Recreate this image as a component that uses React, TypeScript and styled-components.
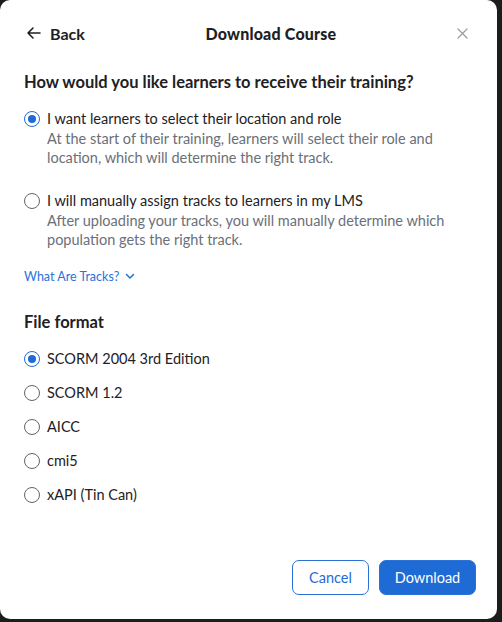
import React, { useState } from "react";
import styled, { createGlobalStyle } from "styled-components";

const Global = createGlobalStyle`
  html, body { margin: 0; padding: 0; background: #1c1c1c; }
  body { font-family: Lato, "Noto Sans", sans-serif; -webkit-font-smoothing: antialiased; }
  * { box-sizing: border-box; }
`;

const Card = styled.div`
  width: 497px;
  height: 619px;
  background: #ffffff;
  border-radius: 10px;
  padding: 0 24px 24px 24px;
  display: flex;
  flex-direction: column;
  color: #1d2125;
`;

const Header = styled.div`
  height: 66px;
  display: flex;
  align-items: center;
`;

const BackButton = styled.button`
  display: flex;
  align-items: center;
  gap: 8px;
  background: none;
  border: none;
  padding: 0 0 0 2px;
  font-family: inherit;
  font-size: 16px;
  font-weight: 700;
  color: #1d2125;
  cursor: pointer;
`;

const Title = styled.h1`
  flex: 1;
  margin: 0;
  text-align: center;
  font-size: 16px;
  font-weight: 900;
  color: #1d2125;
  letter-spacing: 0.2px;
`;

const Close = styled.button`
  background: none;
  border: none;
  padding: 0;
  margin-right: 5px;
  display: flex;
  cursor: pointer;
`;

const SectionTitle = styled.h2<{ $top: number }>`
  margin: ${(p) => p.$top}px 0 0 0;
  font-size: 16.5px;
  font-weight: 700;
  line-height: 24px;
  color: #1d2125;
`;

const OptionList = styled.div<{ $gap: number; $top: number }>`
  display: flex;
  flex-direction: column;
  gap: ${(p) => p.$gap}px;
  margin-top: ${(p) => p.$top}px;
`;

const Option = styled.label`
  display: grid;
  grid-template-columns: 16px 1fr;
  column-gap: 7px;
  align-items: start;
  cursor: pointer;
`;

const RadioCircle = styled.span<{ $checked: boolean }>`
  width: 16px;
  height: 16px;
  margin-top: 2px;
  border-radius: 50%;
  border: 1.5px solid ${(p) => (p.$checked ? "#1f6bd6" : "#5f656d")};
  display: flex;
  align-items: center;
  justify-content: center;
  &::after {
    content: "";
    width: 8px;
    height: 8px;
    border-radius: 50%;
    background: #1f6bd6;
    display: ${(p) => (p.$checked ? "block" : "none")};
  }
`;

const OptionText = styled.div`
  display: flex;
  flex-direction: column;
`;

const OptionLabel = styled.span`
  font-size: 14.5px;
  line-height: 20px;
  color: #1d2125;
`;

const OptionDesc = styled.span`
  font-size: 14.5px;
  line-height: 19px;
  color: #6a7079;
`;

const TracksLink = styled.button`
  margin-top: 20px;
  align-self: flex-start;
  display: flex;
  align-items: center;
  gap: 6px;
  background: none;
  border: none;
  padding: 0;
  font-family: inherit;
  font-size: 12.5px;
  color: #2a72d8;
  cursor: pointer;
`;

const Footer = styled.div`
  margin-top: auto;
  display: flex;
  justify-content: flex-end;
  gap: 10px;
  margin-right: -3px;
`;

const Button = styled.button<{ $primary?: boolean }>`
  height: 35px;
  width: ${(p) => (p.$primary ? 97 : 77)}px;
  padding: 0;
  border-radius: 7px;
  font-family: inherit;
  font-size: 14.5px;
  cursor: pointer;
  border: 1px solid #2a72d8;
  background: ${(p) => (p.$primary ? "#1f6bd6" : "#ffffff")};
  color: ${(p) => (p.$primary ? "#ffffff" : "#1f6bd6")};
`;

const trainingOptions = [
  {
    label: "I want learners to select their location and role",
    desc: "At the start of their training, learners will select their role and location, which will determine the right track.",
  },
  {
    label: "I will manually assign tracks to learners in my LMS",
    desc: "After uploading your tracks, you will manually determine which population gets the right track.",
  },
];

const formats = ["SCORM 2004 3rd Edition", "SCORM 1.2", "AICC", "cmi5", "xAPI (Tin Can)"];

export default function App() {
  const [mode, setMode] = useState(0);
  const [format, setFormat] = useState(0);
  return (
    <>
      <Global />
      <Card>
        <Header>
          <BackButton>
            <svg width="16" height="16" viewBox="0 0 16 16" fill="none" stroke="#1d2125" strokeWidth="1.6" strokeLinecap="round" strokeLinejoin="round">
              <path d="M14 8H2M7 3L2 8l5 5" />
            </svg>
            Back
          </BackButton>
          <Title>Download Course</Title>
          <Close aria-label="Close">
            <svg width="11" height="11" viewBox="0 0 11 11" stroke="#9a9fa5" strokeWidth="1.3" strokeLinecap="round">
              <path d="M1 1l9 9M10 1l-9 9" />
            </svg>
          </Close>
        </Header>

        <SectionTitle $top={4}>How would you like learners to receive their training?</SectionTitle>
        <OptionList $gap={24} $top={15}>
          {trainingOptions.map((o, i) => (
            <Option key={i} onClick={() => setMode(i)}>
              <RadioCircle $checked={mode === i} />
              <OptionText>
                <OptionLabel>{o.label}</OptionLabel>
                <OptionDesc>{o.desc}</OptionDesc>
              </OptionText>
            </Option>
          ))}
        </OptionList>

        <TracksLink>
          What Are Tracks?
          <svg width="10" height="7" viewBox="0 0 10 7" fill="none" stroke="#2a72d8" strokeWidth="1.6" strokeLinecap="round" strokeLinejoin="round">
            <path d="M1.5 1.5L5 5l3.5-3.5" />
          </svg>
        </TracksLink>

        <SectionTitle $top={26}>File format</SectionTitle>
        <OptionList $gap={14} $top={15}>
          {formats.map((f, i) => (
            <Option key={f} onClick={() => setFormat(i)}>
              <RadioCircle $checked={format === i} />
              <OptionLabel>{f}</OptionLabel>
            </Option>
          ))}
        </OptionList>

        <Footer>
          <Button>Cancel</Button>
          <Button $primary>Download</Button>
        </Footer>
      </Card>
    </>
  );
}
